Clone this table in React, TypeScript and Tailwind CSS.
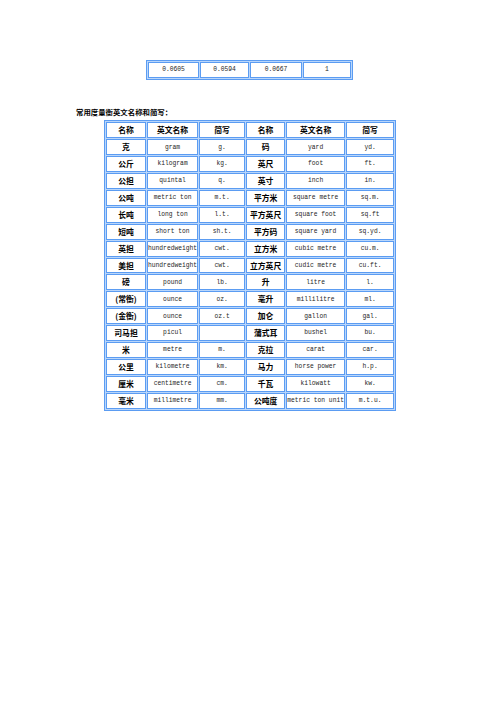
import React from "react";

const rows: [string, string, string, string, string, string][] = [
  ["克", "gram", "g.", "码", "yard", "yd."],
  ["公斤", "kilogram", "kg.", "英尺", "foot", "ft."],
  ["公担", "quintal", "q.", "英寸", "inch", "in."],
  ["公吨", "metric ton", "m.t.", "平方米", "square metre", "sq.m."],
  ["长吨", "long ton", "l.t.", "平方英尺", "square foot", "sq.ft"],
  ["短吨", "short ton", "sh.t.", "平方码", "square yard", "sq.yd."],
  ["英担", "hundredweight", "cwt.", "立方米", "cubic metre", "cu.m."],
  ["美担", "hundredweight", "cwt.", "立方英尺", "cudic metre", "cu.ft."],
  ["磅", "pound", "lb.", "升", "litre", "l."],
  ["(常衡)", "ounce", "oz.", "毫升", "millilitre", "ml."],
  ["(金衡)", "ounce", "oz.t", "加仑", "gallon", "gal."],
  ["司马担", "picul", "", "蒲式耳", "bushel", "bu."],
  ["米", "metre", "m.", "克拉", "carat", "car."],
  ["公里", "kilometre", "km.", "马力", "horse power", "h.p."],
  ["厘米", "centimetre", "cm.", "千瓦", "kilowatt", "kw."],
  ["毫米", "millimetre", "mm.", "公吨度", "metric ton unit", "m.t.u."],
];

const cjk = { fontFamily: '"Noto Sans CJK SC", "Noto Sans", sans-serif' };
const mono = { fontFamily: '"Liberation Mono", "DejaVu Sans Mono", monospace' };

const cell = "border border-[#5b9cf2] bg-white p-0 text-center align-middle whitespace-nowrap overflow-hidden";
const zh = `${cell} text-[7.8px] font-bold text-black leading-none`;
const en = `${cell} text-[6.3px] text-[#1e1e1e] leading-none pt-[1px]`;

export default function App() {
  return (
    <div className="w-[500px] h-[707px] bg-white flex flex-col">
      <div className="pt-[60px] pl-[146px]">
        <table className="table-fixed border-separate border-spacing-[1px] border border-[#5b9cf2] bg-[#b9d6fb]">
          <colgroup>
            <col className="w-[51px]" />
            <col className="w-[49px]" />
            <col className="w-[52px]" />
            <col className="w-[48px]" />
          </colgroup>
          <tbody>
            <tr className="h-[16px]">
              <td className={en} style={mono}>0.0605</td>
              <td className={en} style={mono}>0.0594</td>
              <td className={en} style={mono}>0.0667</td>
              <td className={en} style={mono}>1</td>
            </tr>
          </tbody>
        </table>
      </div>
      <div className="pt-[28px] pl-[76px] text-[7.4px] font-bold text-black leading-none" style={cjk}>
        常用度量衡英文名称和简写：
      </div>
      <div className="pt-[5px] pl-[104px]">
        <table className="table-fixed border-separate border-spacing-[1px] border border-[#5b9cf2] bg-[#b9d6fb]">
          <colgroup>
            <col className="w-[40px]" />
            <col className="w-[50px]" />
            <col className="w-[46px]" />
            <col className="w-[39px]" />
            <col className="w-[59px]" />
            <col className="w-[48px]" />
          </colgroup>
          <tbody>
            <tr className="h-[15.9px]">
              <td className={zh} style={cjk}>名称</td>
              <td className={zh} style={cjk}>英文名称</td>
              <td className={zh} style={cjk}>简写</td>
              <td className={zh} style={cjk}>名称</td>
              <td className={zh} style={cjk}>英文名称</td>
              <td className={zh} style={cjk}>简写</td>
            </tr>
            {rows.map((r, i) => (
              <tr key={i} className="h-[15.9px]">
                <td className={zh} style={cjk}>{r[0]}</td>
                <td className={en} style={mono}>{r[1]}</td>
                <td className={en} style={mono}>{r[2]}</td>
                <td className={zh} style={cjk}>{r[3]}</td>
                <td className={en} style={mono}>{r[4]}</td>
                <td className={en} style={mono}>{r[5]}</td>
              </tr>
            ))}
          </tbody>
        </table>
      </div>
    </div>
  );
}
